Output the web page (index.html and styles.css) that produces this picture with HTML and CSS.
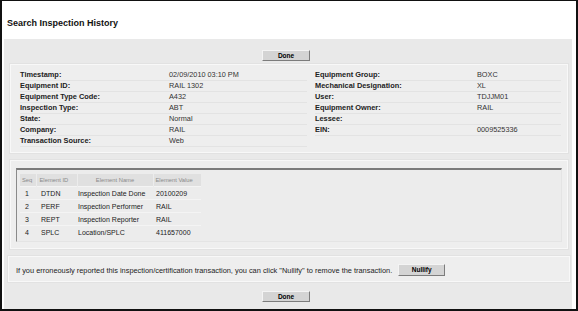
FILE: index.html
```html
<!DOCTYPE html>
<html>
<head>
<meta charset="utf-8">
<link rel="stylesheet" href="styles.css">
</head>
<body>
<div class="frame">
  <h1 class="title">Search Inspection History</h1>
  <div class="panel">
    <div class="btn-row top"><button class="btn">Done</button></div>

    <div class="section info">
      <table class="kv left">
        <tr><th>Timestamp:</th><td>02/09/2010 03:10 PM</td></tr>
        <tr><th>Equipment ID:</th><td>RAIL 1302</td></tr>
        <tr><th>Equipment Type Code:</th><td>A432</td></tr>
        <tr><th>Inspection Type:</th><td>ABT</td></tr>
        <tr><th>State:</th><td>Normal</td></tr>
        <tr><th>Company:</th><td>RAIL</td></tr>
        <tr><th>Transaction Source:</th><td>Web</td></tr>
      </table>
      <table class="kv right">
        <tr><th>Equipment Group:</th><td>BOXC</td></tr>
        <tr><th>Mechanical Designation:</th><td>XL</td></tr>
        <tr><th>User:</th><td>TDJJM01</td></tr>
        <tr><th>Equipment Owner:</th><td>RAIL</td></tr>
        <tr><th>Lessee:</th><td></td></tr>
        <tr><th>EIN:</th><td>0009525336</td></tr>
      </table>
    </div>

    <div class="section elements">
      <div class="inset">
        <table class="el">
          <tr class="hdr">
            <th class="c-seq">Seq</th>
            <th class="c-id">Element ID</th>
            <th class="c-name">Element Name</th>
            <th class="c-val">Element Value</th>
          </tr>
          <tr><td class="c-seq">1</td><td class="c-id">DTDN</td><td class="c-name">Inspection Date Done</td><td class="c-val">20100209</td></tr>
          <tr><td class="c-seq">2</td><td class="c-id">PERF</td><td class="c-name">Inspection Performer</td><td class="c-val">RAIL</td></tr>
          <tr><td class="c-seq">3</td><td class="c-id">REPT</td><td class="c-name">Inspection Reporter</td><td class="c-val">RAIL</td></tr>
          <tr><td class="c-seq">4</td><td class="c-id">SPLC</td><td class="c-name">Location/SPLC</td><td class="c-val">411657000</td></tr>
        </table>
      </div>
    </div>

    <div class="section nullify">
      <span class="msg">If you erroneously reported this inspection/certification transaction, you can click "Nullify" to remove the transaction.</span>
      <button class="btn nbtn">Nullify</button>
    </div>

    <div class="btn-row bottom"><button class="btn">Done</button></div>
  </div>
</div>
</body>
</html>
```

FILE: styles.css
```css
* { box-sizing: border-box; }
html, body { margin: 0; padding: 0; background: #fff; }
body { font-family: "Liberation Sans", Arial, sans-serif; }

.frame {
  width: 578px;
  height: 311px;
  border: 2px solid #111;
  border-top-width: 1px;
  padding: 0 4px 0 2px;
  background: #fff;
  display: flex;
  flex-direction: column;
}

.title {
  margin: 0;
  height: 38px;
  padding: 16px 0 0 3px;
  font-size: 9px;
  line-height: 12px;
  font-weight: bold;
  color: #111;
}

.panel {
  flex: 1;
  background: #e9e9e9;
  display: flex;
  flex-direction: column;
}

.btn-row { display: flex; justify-content: center; }
.btn-row.top { margin-top: 11px; margin-left: -4px; }
.btn-row.bottom { margin-top: 9px; margin-left: -4px; }

.btn {
  font-family: "Liberation Sans", Arial, sans-serif;
  font-size: 6.5px;
  font-weight: bold;
  color: #000;
  width: 48px;
  height: 11px;
  padding: 0;
  line-height: 9px;
  background: #d4d4d4;
  border: 1px solid;
  border-color: #f4f4f4 #7c7c7c #7c7c7c #f4f4f4;
}

.section {
  background: #eeeeee;
  border: 1px solid #f8f8f8;
  box-shadow: 0 0 0 1px #e2e2e2;
}

.info {
  margin: 3px 4px 0 6px;
  padding: 5px 0 5px 9px;
  display: flex;
  align-items: flex-start;
  gap: 6px;
}

.kv { border-collapse: collapse; font-size: 7.4px; }
.kv tr { height: 10.85px; }
.kv th, .kv td {
  padding: 0;
  line-height: 10px;
  border-bottom: 1px solid #e3e3e3;
  text-align: left;
  vertical-align: middle;
  white-space: nowrap;
}
.kv th { font-weight: bold; color: #222; }
.kv td { color: #333; font-size: 7.3px; }
.kv.left { width: 287px; }
.kv.left th { width: 149px; }
.kv.right { width: 246px; margin-left: 2px; }
.kv.right th { width: 162px; }

.elements {
  margin: 7px 4px 0 6px;
  padding: 7px 5px 6px 5px;
}

.inset {
  background: #ececec;
  border-style: solid;
  border-width: 2px 1px 1px 1px;
  border-color: #7b7b7b #e4e4e4 #e4e4e4 #8a8a8a;
  padding: 4px 3px 5px 3px;
  height: 74px;
}

.el { border-collapse: collapse; font-size: 7px; color: #222; }
.el th {
  font-weight: normal;
  font-size: 5.8px;
  color: #8a8a8a;
  background: #e0e0e0;
  height: 12px;
  padding: 0;
  text-align: left;
  border-right: 1px solid #ececec;
}
.el td {
  height: 12.9px;
  padding: 0;
  padding-top: 1px;
  border-top: 1px solid #f4f4f4;
  white-space: nowrap;
}
.el .c-seq { width: 16px; padding-left: 2px; }
.el td.c-seq { padding-left: 5px; }
.el .c-id { width: 41px; padding-left: 3px; }
.el td.c-id { padding-left: 5px; }
.el .c-name { width: 76px; }
.el th.c-name { text-align: center; }
.el td.c-name { padding-left: 1px; }
.el .c-val { width: 48px; padding-left: 2px; }
.el td.c-val { padding-left: 3px; }

.nullify {
  margin: 7px 2px 0 4px;
  height: 26px;
  padding: 1px 0 0 7px;
  display: flex;
  align-items: center;
  gap: 6px;
}
.msg { font-size: 7.4px; color: #222; white-space: nowrap; padding-top: 2px; }
.nbtn { width: 47px; height: 12px; }
```
